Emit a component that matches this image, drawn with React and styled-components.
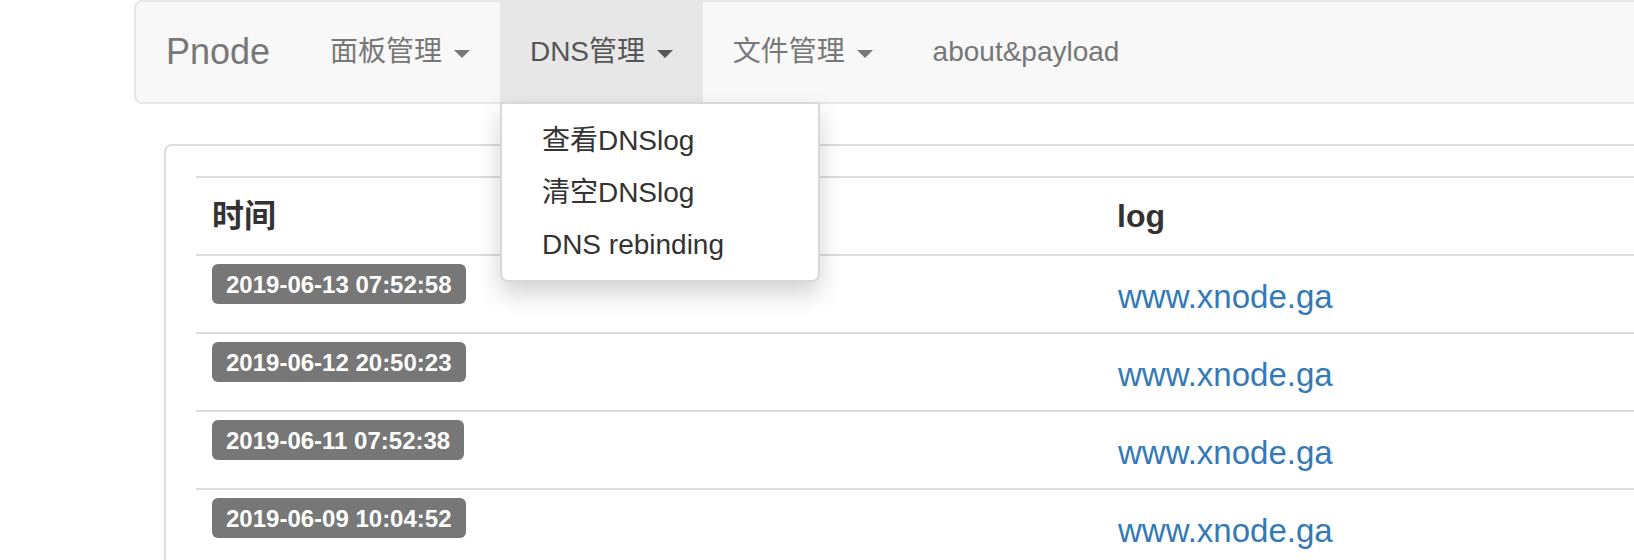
import styled, { createGlobalStyle } from "styled-components"

const GlobalStyle = createGlobalStyle`
  body {
    margin: 0;
    background: #fff;
    overflow: hidden;
    font-family: "Liberation Sans", "Noto Sans CJK SC", sans-serif;
    color: #333;
  }
`

const navItems = [
  { label: "面板管理", caret: true },
  { label: "DNS管理", caret: true, active: true },
  { label: "文件管理", caret: true },
  { label: "about&payload" }
]

const menuItems = ["查看DNSlog", "清空DNSlog", "DNS rebinding"]

const logs = [
  { time: "2019-06-13 07:52:58", host: "www.xnode.ga" },
  { time: "2019-06-12 20:50:23", host: "www.xnode.ga" },
  { time: "2019-06-11 07:52:38", host: "www.xnode.ga" },
  { time: "2019-06-09 10:04:52", host: "www.xnode.ga" }
]

export default function App() {
  return (
    <>
      <GlobalStyle />
      <Page>
        <Navbar>
          <Brand>Pnode</Brand>
          {navItems.map(item => (
            <NavItem key={item.label} $active={item.active}>
              {item.label}
              {item.caret && <> <Caret /></>}
              {item.active && (
                <DropdownMenu>
                  {menuItems.map(m => <MenuItem key={m}>{m}</MenuItem>)}
                </DropdownMenu>
              )}
            </NavItem>
          ))}
        </Navbar>

        <Panel>
          <Row>
            <HeadCell>时间</HeadCell>
            <HeadCell>log</HeadCell>
          </Row>
          {logs.map(log => (
            <Row key={log.time}>
              <TimeCell><Label>{log.time}</Label></TimeCell>
              <LinkCell><Link href="#">{log.host}</Link></LinkCell>
            </Row>
          ))}
        </Panel>
      </Page>
    </>
  )
}

const Page = styled.div`
  width: 1900px;
  padding-left: 134px;
  display: flex;
  flex-direction: column;
  gap: 40px;
`

const Navbar = styled.nav`
  display: flex;
  height: 104px;
  box-sizing: border-box;
  background: #f8f8f8;
  border: 2px solid #e7e7e7;
  border-radius: 8px;
`

const Brand = styled.a`
  padding: 30px;
  font-size: 36px;
  line-height: 40px;
  color: #777;
`

const NavItem = styled.div`
  position: relative;
  padding: 30px;
  font-size: 28px;
  line-height: 40px;
  white-space: nowrap;
  color: ${props => props.$active ? "#555" : "#777"};
  background: ${props => props.$active ? "#e7e7e7" : "transparent"};
`

const Caret = styled.span`
  display: inline-block;
  width: 0;
  height: 0;
  margin-left: 4px;
  vertical-align: middle;
  border-top: 8px solid;
  border-left: 8px solid transparent;
  border-right: 8px solid transparent;
`

const DropdownMenu = styled.div`
  position: absolute;
  top: 100%;
  left: 0;
  min-width: 320px;
  padding: 11px 0 9px;
  box-sizing: border-box;
  background: #fff;
  border: 2px solid rgba(0, 0, 0, 0.15);
  border-radius: 0 0 8px 8px;
  box-shadow: 0 12px 24px rgba(0, 0, 0, 0.175);
  z-index: 10;
`

const MenuItem = styled.div`
  padding: 6px 40px;
  font-size: 28px;
  line-height: 40px;
  color: #333;
`

const Panel = styled.div`
  margin-left: 30px;
  padding: 30px;
  background: #fff;
  border: 2px solid #ddd;
  border-radius: 8px;
`

const Row = styled.div`
  display: grid;
  grid-template-columns: 905px 1fr;
  height: 78px;
  box-sizing: border-box;
  border-top: 2px solid #ddd;
`

const HeadCell = styled.div`
  padding: 16px;
  font-size: 32px;
  line-height: 44px;
  font-weight: 700;
  color: #333;
`

const TimeCell = styled.div`
  padding: 8px 16px;
`

const Label = styled.span`
  display: inline-block;
  padding: 9px 14px 7px;
  font-size: 24px;
  line-height: 24px;
  font-weight: 700;
  color: #fff;
  background: #777;
  border-radius: 6px;
`

const LinkCell = styled.div`
  padding: 16px 16px 16px 17px;
  font-size: 33px;
  line-height: 49px;
`

const Link = styled.a`
  color: #337ab7;
  text-decoration: none;
`
